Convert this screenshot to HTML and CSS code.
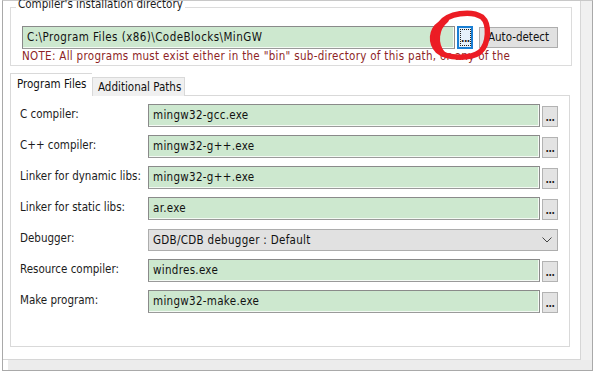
FILE: index.html
```html
<!DOCTYPE html>
<html>
<head>
<meta charset="utf-8">
<link rel="stylesheet" href="styles.css">
</head>
<body>
<div class="shell">
  <div class="viewport">
    <fieldset class="group">
      <legend class="legend">Compiler's installation directory</legend>
      <div class="dirrow">
        <div class="field dirfield">C:\Program Files (x86)\CodeBlocks\MinGW</div>
        <div class="dots focused"><span class="focusring">...</span></div>
        <div class="btn">Auto-detect</div>
      </div>
      <div class="note">NOTE: All programs must exist either in the "bin" sub-directory of this path, or any of the</div>
    </fieldset>
    <div class="tabs">
      <div class="tab active">Program Files</div>
      <div class="tab">Additional Paths</div>
    </div>
    <div class="panel">
      <div class="row"><div class="label">C compiler:</div><div class="field">mingw32-gcc.exe</div><div class="dots">...</div></div>
      <div class="row"><div class="label">C++ compiler:</div><div class="field">mingw32-g++.exe</div><div class="dots">...</div></div>
      <div class="row"><div class="label">Linker for dynamic libs:</div><div class="field">mingw32-g++.exe</div><div class="dots">...</div></div>
      <div class="row"><div class="label">Linker for static libs:</div><div class="field">ar.exe</div><div class="dots">...</div></div>
      <div class="row"><div class="label">Debugger:</div><div class="combo"><span>GDB/CDB debugger : Default</span><svg class="chev" width="10" height="6" viewBox="0 0 10 6"><polyline points="0.5,0.5 5,5 9.5,0.5" fill="none" stroke="#444" stroke-width="1"/></svg></div></div>
      <div class="row"><div class="label">Resource compiler:</div><div class="field">windres.exe</div><div class="dots">...</div></div>
      <div class="row"><div class="label">Make program:</div><div class="field">mingw32-make.exe</div><div class="dots">...</div></div>
    </div>
  </div>
  <div class="vbar"></div>
  <div class="hbar"></div>
</div>
<svg class="mark" width="600" height="375" viewBox="0 0 600 375">
  <path d="M440 24 C448 13 471 10 482 17 C490 24 489 44 480 52 C471 59 447 59 438 51 C430 43 431 30 440 24" fill="none" stroke="#ec1c24" stroke-width="5.5" stroke-linecap="round"/>
  <path d="M446 20 C436 28 434 44 443 54" fill="none" stroke="#ec1c24" stroke-width="5.5" stroke-linecap="round"/>
</svg>
</body>
</html>
```
FILE: styles.css
```css
html, body {
  margin: 0;
  padding: 0;
  background: #ffffff;
}
body {
  width: 600px;
  height: 375px;
  overflow: hidden;
  position: relative;
  font-family: "DejaVu Sans", sans-serif;
  font-stretch: condensed;
  font-size: 11.5px;
  color: #1c1c1c;
}
.shell {
  margin-left: 2px;
  width: 589px;
  height: 369px;
  border: 1px solid #a9a9a9;
  border-top-color: #c8c8c8;
  display: grid;
  grid-template-columns: 1fr 11px;
  grid-template-rows: 1fr 10px;
  background: #ffffff;
}
.viewport {
  grid-column: 1;
  grid-row: 1;
  border-right: 1px solid #d6d6d6;
  border-bottom: 1px solid #d6d6d6;
  padding: 0 0 0 7px;
  display: flex;
  flex-direction: column;
}
.vbar {
  grid-column: 2;
  grid-row: 1;
  background: #f0f0f0;
}
.hbar {
  grid-column: 1 / span 2;
  grid-row: 2;
  background: #ececec;
  margin-left: 5px;
}
.group {
  margin: -3px 0 0 0;
  width: 536px;
  border: 1px solid #dcdcdc;
  padding: 10px 13px 2px 11px;
}
.legend {
  padding: 0 2px 5px 2px;
  margin-left: -6px;
  line-height: 13px;
}
.dirrow {
  display: flex;
  align-items: center;
  height: 23px;
}
.field {
  box-sizing: border-box;
  height: 23px;
  background: #cde8cf;
  border: 1px solid #8a8a8a;
  border-bottom-color: #9a9a9a;
  box-shadow: inset -1px -1px 0 #f4faf4;
  padding: 0 4px;
  line-height: 21px;
  white-space: nowrap;
  overflow: hidden;
  color: #111;
  letter-spacing: 0.3px;
}
.dirfield {
  width: 433px;
  padding-left: 4px;
  letter-spacing: 0.45px;
}
.dots {
  box-sizing: border-box;
  width: 16px;
  height: 21px;
  margin-left: 2px;
  background: #e3e3e3;
  border: 1px solid #b3b3b3;
  font-size: 10px;
  font-weight: bold;
  line-height: 21px;
  text-align: center;
  letter-spacing: -0.5px;
  color: #222;
  align-self: flex-end;
}
.focused {
  align-self: auto;
  height: 23px;
  border: 2px solid #1a7fd4;
  background: #e5f1fb;
  padding: 1px;
  display: flex;
}
.focusring {
  flex: 1;
  border: 1px dotted #222;
  line-height: 17px;
}
.btn {
  box-sizing: border-box;
  width: 79px;
  height: 21px;
  margin-left: 6px;
  background: #e1e1e1;
  border: 1px solid #adadad;
  line-height: 19px;
  text-align: center;
  color: #111;
}
.note {
  color: #8e1f26;
  line-height: 14px;
  white-space: nowrap;
  letter-spacing: 0.3px;
}
.tabs {
  display: flex;
  align-items: flex-end;
  margin-top: 8px;
  height: 22px;
  position: relative;
  z-index: 1;
  margin-bottom: -1px;
}
.tab {
  box-sizing: border-box;
  height: 19px;
  padding: 0 3px 0 5px;
  background: #f0f0f0;
  border: 1px solid #d9d9d9;
  border-bottom: none;
  line-height: 19px;
  color: #111;
}
.tab.active {
  height: 23px;
  background: #ffffff;
  width: 82px;
  padding-left: 6px;
  line-height: 20px;
  border-right: none;
}
.panel {
  box-sizing: border-box;
  width: 560px;
  height: 252px;
  border: 1px solid #d9d9d9;
  padding: 8px 11px 0 9px;
  display: flex;
  flex-direction: column;
  gap: 8px;
  background: #ffffff;
}
.row {
  display: flex;
  align-items: flex-end;
  height: 23px;
}
.label {
  width: 128px;
  flex: none;
  align-self: flex-start;
  line-height: 14px;
  padding-top: 3px;
  white-space: nowrap;
}
.row .field {
  width: 392px;
}
.combo {
  box-sizing: border-box;
  width: 411px;
  height: 22px;
  align-self: center;
  background: #e1e1e1;
  border: 1px solid #adadad;
  display: flex;
  align-items: center;
  justify-content: space-between;
  padding: 0 5px 0 4px;
  color: #111;
  letter-spacing: 0.3px;
}
.chev {
  display: block;
}
.mark {
  position: absolute;
  left: 0;
  top: 0;
  pointer-events: none;
}
```
